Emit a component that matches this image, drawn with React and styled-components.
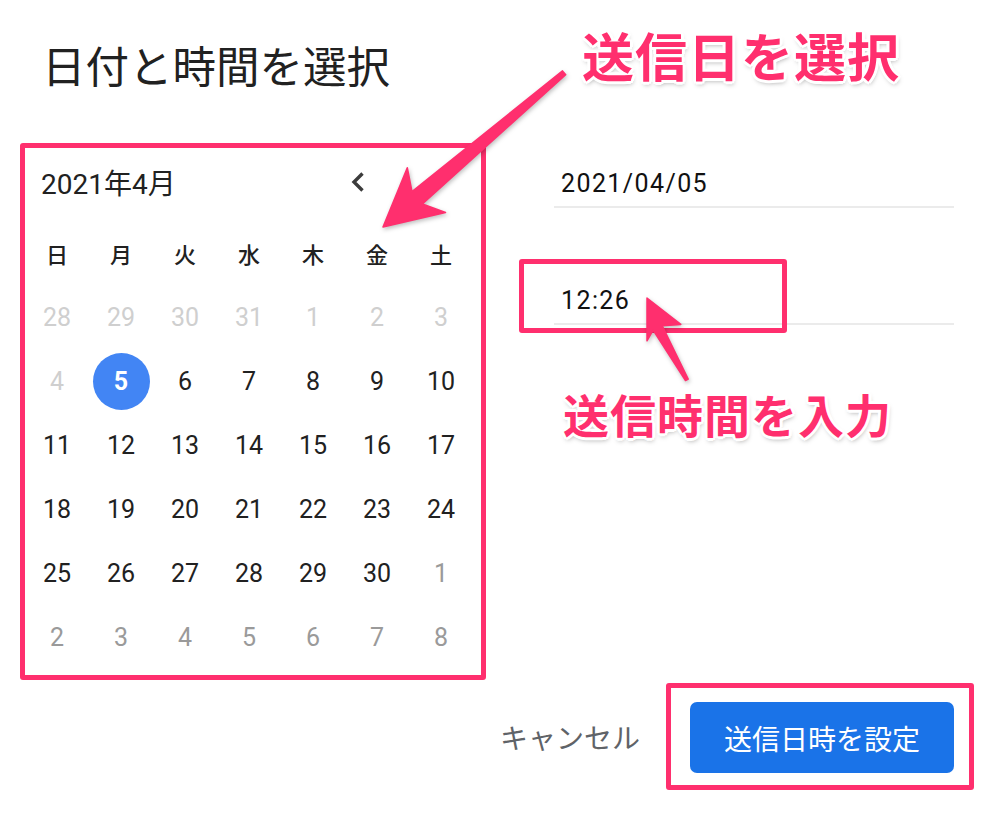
import React from "react";
import styled, { createGlobalStyle } from "styled-components";

const PINK = "#ff2f6e";

const Global = createGlobalStyle`
  html, body { margin: 0; padding: 0; background: #fff; }
  body { font-family: Roboto, "Noto Sans CJK JP", sans-serif; color: #212121; overflow: hidden; }
  * { box-sizing: border-box; }
`;

const Page = styled.div`
  position: relative;
  width: 998px;
  height: 820px;
  background: #fff;
  display: flex;
  flex-direction: column;
`;

const Title = styled.h1`
  margin: 0;
  padding: 43px 0 0 42px;
  font-family: "Noto Sans CJK JP", sans-serif;
  font-weight: 400;
  font-size: 43.5px;
  line-height: 1;
  height: 86px;
  color: #212121;
`;

const Main = styled.div`
  display: flex;
  margin-top: 57px;
  padding-left: 20px;
`;

const Calendar = styled.div`
  width: 466px;
  height: 537px;
  border: 5px solid ${PINK};
  border-radius: 3px;
  padding: 0 8px 6px 0;
  display: flex;
  flex-direction: column;
`;

const CalHeader = styled.div`
  height: 73px;
  padding: 0 0 5px 16px;
  display: flex;
  align-items: center;
`;

const MonthLabel = styled.div`
  flex: 1;
  font-size: 28px;
  color: #212121;
`;

const NavButton = styled.button`
  width: 40px;
  height: 40px;
  margin-right: 95px;
  border: 0;
  background: none;
  padding: 0;
  display: flex;
  align-items: center;
  justify-content: center;
`;

const Grid = styled.div`
  display: grid;
  grid-template-columns: repeat(7, 64px);
  grid-auto-rows: 64px;
`;

const WeekDay = styled.div`
  display: flex;
  align-items: center;
  justify-content: center;
  font-family: "Noto Sans CJK JP", sans-serif;
  font-size: 22px;
  font-weight: 500;
  color: #212121;
`;

const dayColors = { prev: "#cfcfcf", cur: "#212121", next: "#9a9a9a" };

const Day = styled.div`
  display: flex;
  align-items: center;
  justify-content: center;
  font-size: 25px;
  color: ${(p) => dayColors[p.$kind]};
`;

const Selected = styled.span`
  width: 57px;
  height: 57px;
  border-radius: 50%;
  background: #4285f4;
  color: #fff;
  font-weight: 700;
  display: flex;
  align-items: center;
  justify-content: center;
`;

const Fields = styled.div`
  margin-left: 68px;
  width: 400px;
  padding-top: 17px;
  display: flex;
  flex-direction: column;
  gap: 69px;
`;

const Field = styled.div`
  height: 48px;
  padding-left: 7px;
  display: flex;
  align-items: center;
  border-bottom: 2px solid #ebebeb;
  font-size: 25px;
  letter-spacing: 1.4px;
  color: #111;
`;

const Footer = styled.div`
  margin-top: 3px;
  padding-right: 24px;
  display: flex;
  justify-content: flex-end;
  align-items: center;
  gap: 26px;
`;

const CancelButton = styled.button`
  border: 0;
  background: none;
  padding: 0;
  font-family: "Noto Sans CJK JP", sans-serif;
  font-size: 28px;
  color: #5f6368;
`;

const HighlightFrame = styled.div`
  border: 5px solid ${PINK};
  border-radius: 3px;
  padding: 14px 15px 12px 19px;
`;

const PrimaryButton = styled.button`
  width: 264px;
  height: 71px;
  border: 0;
  border-radius: 7px;
  background: #1a73e8;
  color: #fff;
  font-family: "Noto Sans CJK JP", sans-serif;
  font-size: 28px;
  display: flex;
  align-items: center;
  justify-content: center;
`;

const TimeHighlight = styled.div`
  position: absolute;
  left: 519px;
  top: 259px;
  width: 268px;
  height: 74px;
  border: 5px solid ${PINK};
  border-radius: 3px;
`;

const outline = [
  "3px 0 0 #fff", "-3px 0 0 #fff", "0 3px 0 #fff", "0 -3px 0 #fff",
  "2px 2px 0 #fff", "-2px 2px 0 #fff", "2px -2px 0 #fff", "-2px -2px 0 #fff",
  "1px 3px 5px rgba(0,0,0,0.35)",
].join(", ");

const Callout = styled.div`
  position: absolute;
  left: ${(p) => p.$x}px;
  top: ${(p) => p.$y}px;
  font-family: "Noto Sans CJK JP", sans-serif;
  font-weight: 700;
  font-size: ${(p) => p.$size}px;
  line-height: 1;
  letter-spacing: 1px;
  color: ${PINK};
  white-space: nowrap;
  text-shadow: ${outline};
`;

const ArrowLayer = styled.svg`
  position: absolute;
  left: 0;
  top: 0;
  pointer-events: none;
  filter: drop-shadow(1px 2px 2px rgba(0, 0, 0, 0.25));
`;

const weekdays = ["日", "月", "火", "水", "木", "金", "土"];

const days = [
  ...[28, 29, 30, 31].map((d) => ({ d, k: "prev" })),
  ...[1, 2, 3, 4].map((d) => ({ d, k: "prev" })),
  ...Array.from({ length: 26 }, (_, i) => ({ d: i + 5, k: "cur" })),
  ...[1, 2, 3, 4, 5, 6, 7, 8].map((d) => ({ d, k: "next" })),
];

export default function App() {
  return (
    <>
      <Global />
      <Page>
        <Title>日付と時間を選択</Title>
        <Main>
          <Calendar>
            <CalHeader>
              <MonthLabel>2021年4月</MonthLabel>
              <NavButton aria-label="前の月">
                <svg width="16" height="22" viewBox="0 0 16 22">
                  <polyline points="12.5,2.5 4,11 12.5,19.5" fill="none" stroke="#3c3c3c" strokeWidth="3.4" />
                </svg>
              </NavButton>
            </CalHeader>
            <Grid>
              {weekdays.map((w) => (
                <WeekDay key={w}>{w}</WeekDay>
              ))}
              {days.map((x, i) => (
                <Day key={i} $kind={x.k}>
                  {x.k === "cur" && x.d === 5 ? <Selected>5</Selected> : x.d}
                </Day>
              ))}
            </Grid>
          </Calendar>
          <Fields>
            <Field>2021/04/05</Field>
            <Field>12:26</Field>
          </Fields>
        </Main>
        <Footer>
          <CancelButton>キャンセル</CancelButton>
          <HighlightFrame>
            <PrimaryButton>送信日時を設定</PrimaryButton>
          </HighlightFrame>
        </Footer>

        <TimeHighlight />
        <Callout $x={582} $y={29} $size={52}>送信日を選択</Callout>
        <Callout $x={563} $y={390} $size={46}>送信時間を入力</Callout>

        <ArrowLayer width="998" height="820" viewBox="0 0 998 820">
          <polygon
            fill={PINK}
            points="383,227 445.5,212.5 422.4,203.9 565.7,74.7 562.5,70.9 412,191.7 407.3,167.7"
            strokeLinejoin="round"
            stroke={PINK}
            strokeWidth="1.5"
          />
          <polygon
            fill={PINK}
            points="647,298 680.8,324.4 662.1,325.7 688.2,379.1 685.5,380.5 653.1,330.1 647,340.8"
            strokeLinejoin="round"
            stroke={PINK}
            strokeWidth="1.5"
          />
        </ArrowLayer>
      </Page>
    </>
  );
}
